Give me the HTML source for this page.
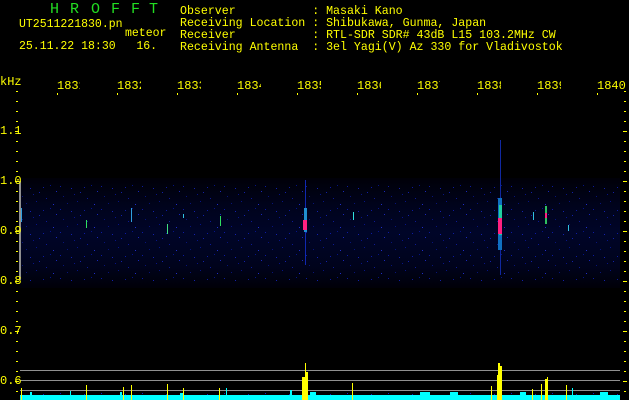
<!DOCTYPE html>
<html><head><meta charset="utf-8"><style>
html,body{margin:0;padding:0;background:#000;}
#c{position:relative;width:629px;height:400px;overflow:hidden;background:#000;font-family:"Liberation Mono",monospace;font-size:11.5px;color:#ffff00;}
.t{position:absolute;white-space:pre;line-height:12px;}
.g{color:#22dd22;font-size:15px;}
</style></head><body><div id="c">
<div class="t g" style="left:50px;top:4px;">H</div>
<div class="t g" style="left:70px;top:4px;">R</div>
<div class="t g" style="left:91px;top:4px;">O</div>
<div class="t g" style="left:111px;top:4px;">F</div>
<div class="t g" style="left:131px;top:4px;">F</div>
<div class="t g" style="left:149px;top:4px;">T</div>
<div class="t" style="left:19px;top:19px;font-size:11.5px;">UT2511221830.pn</div>
<div class="t" style="left:125px;top:28px;font-size:11.5px;">meteor</div>
<div class="t" style="left:19px;top:41px;font-size:11.5px;">25.11.22 18:30   16.</div>
<div class="t" style="left:180px;top:6px;font-size:11.6px;">Observer           : Masaki Kano
Receiving Location : Shibukawa, Gunma, Japan
Receiver           : RTL-SDR SDR# 43dB L15 103.2MHz CW
Receiving Antenna  : 3el Yagi(V) Az 330 for Vladivostok</div>
<div class="t" style="left:0px;top:76px;font-size:12px;">kHz</div>
<svg width="629" height="400" style="position:absolute;left:0;top:0" xmlns="http://www.w3.org/2000/svg">
<defs>
<pattern id="n" width="41" height="23" patternUnits="userSpaceOnUse">
<rect x="2" y="3" width="1" height="1" fill="#1020c0"/><rect x="9" y="1" width="1" height="1" fill="#0818a0"/>
<rect x="15" y="7" width="1" height="1" fill="#2030e0"/><rect x="22" y="12" width="1" height="1" fill="#0a1890"/>
<rect x="30" y="4" width="1" height="1" fill="#1828d0"/><rect x="36" y="17" width="1" height="1" fill="#0818a0"/>
<rect x="5" y="14" width="1" height="1" fill="#1020b0"/><rect x="12" y="20" width="1" height="1" fill="#2838f0"/>
<rect x="26" y="19" width="1" height="1" fill="#0a1890"/><rect x="19" y="2" width="1" height="1" fill="#1020c0"/>
<rect x="33" y="10" width="1" height="1" fill="#0a18a0"/><rect x="39" y="8" width="1" height="1" fill="#1828c8"/>
</pattern>
<linearGradient id="bg" x1="0" y1="0" x2="0" y2="1">
<stop offset="0" stop-color="#000008"/><stop offset="0.25" stop-color="#00031c"/><stop offset="0.5" stop-color="#000528"/><stop offset="0.8" stop-color="#00031c"/><stop offset="1" stop-color="#000008"/>
</linearGradient>
</defs>
<rect x="20" y="178" width="600" height="110" fill="url(#bg)"/>
<rect x="20" y="185" width="600" height="98" fill="url(#n)" opacity="0.8"/>
<rect x="305" y="180" width="1" height="85" fill="#1028b0"/>
<rect x="304" y="208" width="3" height="24" fill="#2090d0"/>
<rect x="303" y="220" width="4" height="10" fill="#ff2080"/>
<rect x="500" y="140" width="1" height="135" fill="#1028a0"/>
<rect x="498" y="198" width="4" height="52" fill="#1070c0"/>
<rect x="499" y="205" width="3" height="30" fill="#20d0a0"/>
<rect x="498" y="218" width="4" height="16" fill="#ff2080"/>
<rect x="545" y="206" width="2" height="18" fill="#30c060"/><rect x="545" y="213" width="2" height="5" fill="#ff2080"/>
<rect x="131" y="208" width="1" height="14" fill="#30a0e0"/><rect x="86" y="220" width="1" height="8" fill="#30e060"/>
<rect x="220" y="216" width="1" height="10" fill="#30e060"/><rect x="353" y="212" width="1" height="8" fill="#30e0e0"/>
<rect x="167" y="224" width="1" height="10" fill="#40e080"/><rect x="21" y="208" width="1" height="14" fill="#30a0e0"/>
<rect x="533" y="212" width="1" height="8" fill="#30c0e0"/><rect x="568" y="225" width="1" height="6" fill="#30c0e0"/>
<rect x="183" y="214" width="1" height="4" fill="#30c0e0"/>
<rect x="19" y="181" width="2" height="99" fill="#909090"/>
<rect x="20" y="370" width="600" height="1" fill="#909090"/>
<rect x="20" y="380" width="600" height="1" fill="#909090"/>
<rect x="20" y="390" width="600" height="1" fill="#909090"/>
<g id="tk" fill="#ffff00">
<rect x="16" y="91" width="2" height="1"/><rect x="16" y="101" width="2" height="1"/><rect x="16" y="111" width="2" height="1"/><rect x="16" y="121" width="2" height="1"/><rect x="15" y="131" width="4" height="1"/>
<rect x="16" y="141" width="2" height="1"/><rect x="16" y="151" width="2" height="1"/><rect x="16" y="161" width="2" height="1"/><rect x="16" y="171" width="2" height="1"/><rect x="15" y="181" width="4" height="1"/>
<rect x="16" y="191" width="2" height="1"/><rect x="16" y="201" width="2" height="1"/><rect x="16" y="211" width="2" height="1"/><rect x="16" y="221" width="2" height="1"/><rect x="15" y="231" width="4" height="1"/>
<rect x="16" y="241" width="2" height="1"/><rect x="16" y="251" width="2" height="1"/><rect x="16" y="261" width="2" height="1"/><rect x="16" y="271" width="2" height="1"/><rect x="15" y="281" width="4" height="1"/>
<rect x="16" y="291" width="2" height="1"/><rect x="16" y="301" width="2" height="1"/><rect x="16" y="311" width="2" height="1"/><rect x="16" y="321" width="2" height="1"/><rect x="15" y="331" width="4" height="1"/>
<rect x="16" y="341" width="2" height="1"/><rect x="16" y="351" width="2" height="1"/><rect x="16" y="361" width="2" height="1"/><rect x="16" y="371" width="2" height="1"/><rect x="15" y="381" width="4" height="1"/><rect x="16" y="391" width="2" height="1"/>
</g>
<use href="#tk" transform="translate(608,0)"/>
<rect x="20" y="395" width="600" height="5" fill="#00ffff"/>
<rect x="20" y="393" width="600" height="2" fill="url(#n)"/>
<g fill="#00ffff">
<rect x="30" y="392" width="2" height="3"/><rect x="70" y="391" width="1" height="4"/><rect x="120" y="392" width="2" height="3"/><rect x="180" y="393" width="3" height="2"/>
<rect x="226" y="388" width="1" height="7"/><rect x="290" y="390" width="2" height="5"/><rect x="310" y="392" width="6" height="3"/><rect x="420" y="392" width="10" height="3"/>
<rect x="450" y="392" width="8" height="3"/><rect x="520" y="392" width="6" height="3"/><rect x="572" y="388" width="1" height="7"/><rect x="600" y="392" width="8" height="3"/>
</g>
<g fill="#ffff00">
<rect x="302" y="377" width="3" height="23"/><rect x="305" y="363" width="1" height="37"/><rect x="306" y="372" width="2" height="28"/>
<rect x="497" y="375" width="3" height="25"/><rect x="498" y="363" width="2" height="37"/><rect x="500" y="366" width="2" height="34"/>
<rect x="545" y="379" width="3" height="21"/><rect x="547" y="377" width="1" height="23"/><rect x="541" y="384" width="1" height="16"/>
<rect x="21" y="388" width="1" height="12"/><rect x="86" y="385" width="1" height="15"/><rect x="123" y="387" width="1" height="13"/>
<rect x="131" y="385" width="1" height="15"/><rect x="167" y="384" width="1" height="16"/><rect x="183" y="388" width="1" height="12"/>
<rect x="219" y="388" width="1" height="12"/><rect x="352" y="383" width="1" height="17"/><rect x="491" y="386" width="1" height="14"/>
<rect x="532" y="389" width="1" height="11"/><rect x="566" y="385" width="1" height="15"/>
</g>
<g fill="#ffff00">
<rect x="57" y="93" width="1" height="2"/><rect x="117" y="93" width="1" height="2"/><rect x="177" y="93" width="1" height="2"/><rect x="237" y="93" width="1" height="2"/><rect x="297" y="93" width="1" height="2"/><rect x="357" y="93" width="1" height="2"/><rect x="417" y="93" width="1" height="2"/><rect x="477" y="93" width="1" height="2"/><rect x="537" y="93" width="1" height="2"/><rect x="597" y="93" width="1" height="2"/>
</g>
</svg>
<div class="t" style="left:57px;top:80px;font-size:12px;width:23px;overflow:hidden;">1831</div>
<div class="t" style="left:117px;top:80px;font-size:12px;width:24px;overflow:hidden;">1832</div>
<div class="t" style="left:177px;top:80px;font-size:12px;width:24px;overflow:hidden;">1833</div>
<div class="t" style="left:237px;top:80px;font-size:12px;width:24px;overflow:hidden;">1834</div>
<div class="t" style="left:297px;top:80px;font-size:12px;width:24px;overflow:hidden;">1835</div>
<div class="t" style="left:357px;top:80px;font-size:12px;width:24px;overflow:hidden;">1836</div>
<div class="t" style="left:417px;top:80px;font-size:12px;width:23px;overflow:hidden;">1837</div>
<div class="t" style="left:477px;top:80px;font-size:12px;width:24px;overflow:hidden;">1838</div>
<div class="t" style="left:537px;top:80px;font-size:12px;width:24px;overflow:hidden;">1839</div>
<div class="t" style="left:597px;top:80px;font-size:12px;">1840</div>
<div class="t" style="left:0px;top:125px;font-size:12px;">1.1</div>
<div class="t" style="left:0px;top:175px;font-size:12px;">1.0</div>
<div class="t" style="left:0px;top:225px;font-size:12px;">0.9</div>
<div class="t" style="left:0px;top:275px;font-size:12px;">0.8</div>
<div class="t" style="left:0px;top:325px;font-size:12px;">0.7</div>
<div class="t" style="left:0px;top:375px;font-size:12px;">0.6</div>
</div></body></html>
